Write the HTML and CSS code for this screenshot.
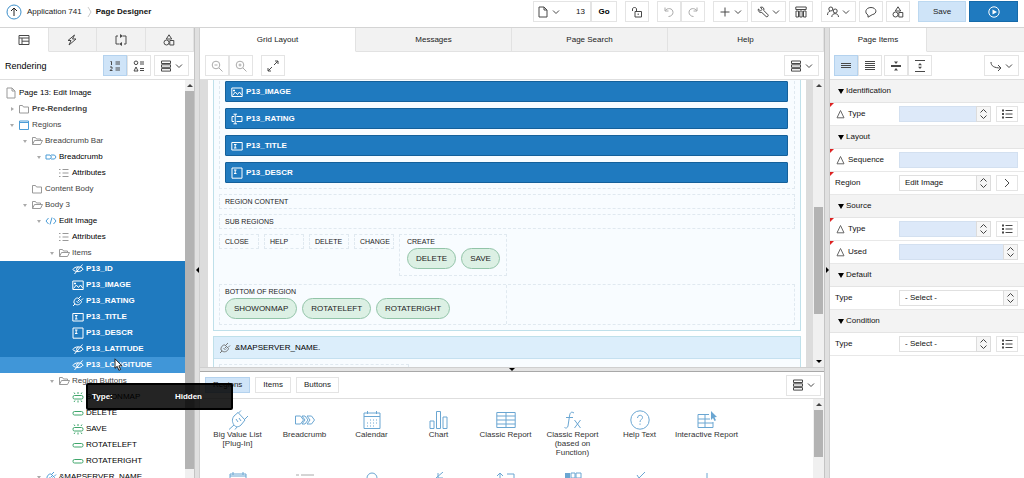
FILE: index.html
```html
<!DOCTYPE html>
<html lang="en">
<head>
<meta charset="utf-8">
<title>Page Designer</title>
<link rel="stylesheet" href="styles.css">
</head>
<body>
<svg class="sprite" aria-hidden="true">
  <symbol id="chev" viewBox="0 0 8 8"><path d="M1 2.500l3 3 3-3"/></symbol>
  <symbol id="updown" viewBox="0 0 8 12"><path d="M1 4.500L4 1.500l3 3M1 7.500l3 3 3-3"/></symbol>
  <symbol id="page" viewBox="0 0 12 12"><path d="M2 1h5l3 3v7H2zM7 1v3h3"/></symbol>
  <symbol id="folder" viewBox="0 0 12 12"><path d="M1.500 2.500h3l1 1.500h5v6h-9z"/></symbol>
  <symbol id="open" viewBox="0 0 12 12"><path d="M1.500 9.500v-7h3l1 1.500h4v1.500M1.500 9.500l2-4h8l-2 4z"/></symbol>
  <symbol id="window" viewBox="0 0 12 12"><path d="M1.500 2h9v8.500h-9zM1.500 3.500h9"/></symbol>
  <symbol id="crumb" viewBox="0 0 12 12"><path d="M1 4h4l1.500 2L5 8H1zM6 4h3.500L11 6 9.500 8H6"/></symbol>
  <symbol id="attrs" viewBox="0 0 12 12"><path d="M4.500 2.500h6M4.500 6h6M4.500 9.500h6M1 2.500h1.500M1 6h1.500M1 9.500h1.500"/></symbol>
  <symbol id="code" viewBox="0 0 12 12"><path d="M3.500 3L1 6l2.500 3M8.500 3L11 6 8.500 9M7 2.500l-2 7"/></symbol>
  <symbol id="hidden" viewBox="0 0 12 12"><path d="M.8 6.500C3 3.200 8.500 2.800 11.200 6 9 9.300 3.500 9.500.8 6.500zM10.500 1.500l-8 9.500M6.500 4.300a2 2 0 1 0 .1 4"/></symbol>
  <symbol id="image" viewBox="0 0 12 12"><path d="M.8 2h10.400v8.500H.8zM1.500 9.500L4.300 6l2.200 2.500L8.500 6l2.200 3M3 3.500v2M2 4.500h2"/></symbol>
  <symbol id="plug" viewBox="0 0 12 12"><path d="M2 8C1.500 5 4 2.500 6 3L9.500 6.500C9 9 6 10.500 4 9.500zM7 3l2-2M9 5.500l2-2M3 9l-2 2M4.500 6l2 2M6 5l1.500 1.500"/></symbol>
  <symbol id="text" viewBox="0 0 12 12"><path d="M.8 2.500h10.400v7.500H.8zM3 4.500h2.500M4.200 4.500v3.500M3 8h2.500"/></symbol>
  <symbol id="area" viewBox="0 0 12 12"><path d="M1 1h10v10.200H1zM3 3h2.500M4.200 3v3.500M3 6.500h2.500"/></symbol>
  <symbol id="rate" viewBox="0 0 12 12"><path d="M2.500 1.200h3.500M2.500 10.800h3.500M4.200 1.200v9.600M3 3.500H1v5h2M5.500 3.500H11v5H5.500"/></symbol>
  <symbol id="pill" viewBox="0 0 12 12"><rect x="1" y="4.500" width="10" height="3.500" rx="1.500"/></symbol>
  <symbol id="pillhot" viewBox="0 0 12 12"><rect x="1" y="4.500" width="10" height="3.500" rx="1.500"/><path d="M3 3L2 1.500M6 3V1M9 3l1-1.500M3 9.500L2 11M6 9.500v2M9 9.500l1 1.500"/></symbol>
  <symbol id="stack" viewBox="0 0 12 12"><path d="M1.500 1h9v2.500h-9zM1.500 4.800h9v2.500h-9zM1.500 8.600h9v2.500h-9z"/></symbol>
  <symbol id="shapes" viewBox="0 0 12 12"><path d="M6 .8L8.700 5H3.300zM6.800 6.500h4v4.500h-4z"/><circle cx="3.500" cy="8.500" r="2.500"/></symbol>
  <symbol id="zout" viewBox="0 0 12 12"><circle cx="5" cy="5" r="3.800"/><path d="M8 8l3.500 3.500M3.500 5h3"/></symbol>
  <symbol id="zin" viewBox="0 0 12 12"><circle cx="5" cy="5" r="3.800"/><path d="M8 8l3.500 3.500M3.500 5h3M5 3.500v3"/></symbol>
  <symbol id="undo" viewBox="0 0 12 12"><path d="M2 1.500v3.500h3.500M2.200 4.800C4 1.500 10 1.800 10 6.500c0 2-2 4-4.500 4"/></symbol>
  <symbol id="tri" viewBox="0 0 12 12"><path d="M5.500 2.500L9 9.800H2z"/></symbol>
  <symbol id="list" viewBox="0 0 12 12"><path d="M4.500 2.500h7M4.500 6h7M4.500 9.500h7"/><path d="M1 2.500h2M1 6h2M1 9.500h2" stroke-width="2"/></symbol>
</svg>

<div class="app">
  <header class="topbar">
    <nav class="crumbs">
      <a class="up" href="#" aria-label="Up"><svg class="i16" viewBox="0 0 16 16"><circle class="ring" cx="8" cy="8" r="7"/><path d="M8 12V4M5 7l3-3 3 3"/></svg></a>
      <a href="#">Application 741</a>
      <svg class="sep" viewBox="0 0 6 16"><path d="M1 3l3 5-3 5"/></svg>
      <strong>Page Designer</strong>
    </nav>
    <div class="actions">
      <div class="group">
        <button class="btn pagebtn" aria-label="Page"><svg class="i12"><use href="#page"/></svg><svg class="i8"><use href="#chev"/></svg></button>
        <input class="pageno" aria-label="Page number" value="13">
        <button class="btn go">Go</button>
      </div>
      <button class="btn sq" aria-label="Unlock"><svg class="i12" viewBox="0 0 12 12"><path d="M4 5.500h6.500V11H4zM5.500 5.500V3c0-2-4-2-4 0v2M7.200 7.500v1.500"/></svg></button>
      <div class="group pale">
        <button class="btn sq" aria-label="Undo"><svg class="i12"><use href="#undo"/></svg></button>
        <button class="btn sq" aria-label="Redo"><svg class="i12 flip"><use href="#undo"/></svg></button>
      </div>
      <div class="cluster">
        <button class="btn wide" aria-label="Create"><svg class="i12" viewBox="0 0 12 12"><path d="M6 1.500v9M1.500 6h9"/></svg><svg class="i8"><use href="#chev"/></svg></button>
        <button class="btn wide" aria-label="Utilities"><svg class="i12" viewBox="0 0 12 12"><path d="M3.500 1.200C6 .5 7.500 2.500 6.800 4.500l4.200 4.300c.8 1-.8 2.600-1.800 1.800L4.800 6.500C2.500 7 .8 5.200 1.300 3L3.500 5 5 3.400z"/></svg><svg class="i8"><use href="#chev"/></svg></button>
        <button class="btn sq" aria-label="Component view"><svg class="i12" viewBox="0 0 12 12"><path d="M.8 1h10.400v2.500H.8zM1 5h2.500v6H1zM4.800 5h2.400v6H4.800zM8.500 5H11v6H8.500z"/></svg></button>
      </div>
      <div class="cluster">
        <button class="btn wide" aria-label="Team"><svg class="i12" viewBox="0 0 12 12"><circle cx="3.800" cy="3" r="2"/><circle cx="8.200" cy="5" r="2"/><path d="M.5 9c0-2 1-3.300 2.500-4M4.800 11c0-4.500 6.700-4.500 6.700 0"/></svg><svg class="i8"><use href="#chev"/></svg></button>
        <button class="btn sq" aria-label="Comments"><svg class="i12" viewBox="0 0 12 12"><path d="M3 9C-.8 7 .5 1.500 6 1.500s7 6 1.200 7.200L3 11.200z"/></svg></button>
        <button class="btn sq" aria-label="Shared components"><svg class="i12"><use href="#shapes"/></svg></button>
      </div>
      <div class="cluster">
        <button class="btn save">Save</button>
        <button class="btn run" aria-label="Run"><svg class="i12" viewBox="0 0 12 12"><circle cx="6" cy="6" r="5.200"/><path class="solid" d="M4.500 3.500L9 6 4.500 8.500z"/></svg></button>
      </div>
    </div>
  </header>

  <main class="panes">
    <section class="pane left">
      <div class="tabs">
        <button class="tab on" aria-label="Rendering"><svg class="i12" viewBox="0 0 12 12"><path d="M1 1.500h10v9H1zM1 4h10M4 4v6.500M4 7.200h7"/></svg></button>
        <button class="tab" aria-label="Dynamic actions"><svg class="i12" viewBox="0 0 12 12"><path d="M8.500 1L2 6.500h3L3 11l7-6H6.500z"/></svg></button>
        <button class="tab" aria-label="Processing"><svg class="i12" viewBox="0 0 12 12"><path d="M3 2H1v8h3M9 2H8M9 2h2v8H9"/><path class="solid" d="M5 0l3 2-3 2zM7 8l-3 2 3 2z"/></svg></button>
        <button class="tab" aria-label="Shared components"><svg class="i12"><use href="#shapes"/></svg></button>
      </div>
      <div class="tools">
        <span class="title">Rendering</span>
        <div class="group">
          <button class="btn sq on" aria-label="Group by processing order"><svg class="i12" viewBox="0 0 12 12"><path d="M1.500 1.500h1v3.500M1 7h2v1.500L1 10.500h2.500M6.500 2h4.500M6.500 4h4.500M6.500 8h4.500M6.500 10h4.500"/></svg></button>
          <button class="btn sq" aria-label="Group by component type"><svg class="i12" viewBox="0 0 12 12"><circle cx="3" cy="2.800" r="1.800"/><path d="M3 7l2 4H1zM7 2h4M7 4h4M7 8.500h4M7 10.500h4"/></svg></button>
        </div>
        <button class="btn wide" aria-label="Menu"><svg class="i12"><use href="#stack"/></svg><svg class="i8"><use href="#chev"/></svg></button>
      </div>
      <div class="scroller">
        <ul class="tree">
          <li class="l0"><svg class="i12"><use href="#page"/></svg>Page 13: Edit Image</li>
          <li class="l1 dim strong"><i class="tw shut"></i><svg class="i12"><use href="#folder"/></svg>Pre-Rendering</li>
          <li class="l1 dim"><i class="tw"></i><svg class="i12 blue"><use href="#window"/></svg>Regions</li>
          <li class="l2 dim"><i class="tw"></i><svg class="i12"><use href="#open"/></svg>Breadcrumb Bar</li>
          <li class="l3"><i class="tw"></i><svg class="i12 blue"><use href="#crumb"/></svg>Breadcrumb</li>
          <li class="l4"><i class="tw none"></i><svg class="i12"><use href="#attrs"/></svg>Attributes</li>
          <li class="l2 dim"><i class="tw none"></i><svg class="i12"><use href="#folder"/></svg>Content Body</li>
          <li class="l2 dim"><i class="tw"></i><svg class="i12"><use href="#open"/></svg>Body 3</li>
          <li class="l3"><i class="tw"></i><svg class="i12 blue"><use href="#code"/></svg>Edit Image</li>
          <li class="l4"><i class="tw none"></i><svg class="i12"><use href="#attrs"/></svg>Attributes</li>
          <li class="l4 dim"><i class="tw"></i><svg class="i12"><use href="#open"/></svg>Items</li>
          <li class="l5 sel"><i class="tw none"></i><svg class="i12"><use href="#hidden"/></svg>P13_ID</li>
          <li class="l5 sel"><i class="tw none"></i><svg class="i12"><use href="#image"/></svg>P13_IMAGE</li>
          <li class="l5 sel"><i class="tw none"></i><svg class="i12"><use href="#plug"/></svg>P13_RATING</li>
          <li class="l5 sel"><i class="tw none"></i><svg class="i12"><use href="#text"/></svg>P13_TITLE</li>
          <li class="l5 sel"><i class="tw none"></i><svg class="i12"><use href="#area"/></svg>P13_DESCR</li>
          <li class="l5 sel"><i class="tw none"></i><svg class="i12"><use href="#hidden"/></svg>P13_LATITUDE</li>
          <li class="l5 sel hover"><i class="tw none"></i><svg class="i12"><use href="#hidden"/></svg>P13_LONGITUDE
            <svg class="cursor" viewBox="0 0 9 13"><path d="M1 .8v9.500l2.200-2 1.700 4 1.700-.8-1.700-3.700h3z"/></svg>
            <span class="tip" role="tooltip"><b>Type:</b><b>Hidden</b></span>
          </li>
          <li class="l4 dim"><i class="tw"></i><svg class="i12"><use href="#open"/></svg>Region Buttons</li>
          <li class="l5"><i class="tw none"></i><svg class="i12 green"><use href="#pillhot"/></svg>SHOWONMAP</li>
          <li class="l5"><i class="tw none"></i><svg class="i12 green"><use href="#pill"/></svg>DELETE</li>
          <li class="l5"><i class="tw none"></i><svg class="i12 green"><use href="#pillhot"/></svg>SAVE</li>
          <li class="l5"><i class="tw none"></i><svg class="i12 green"><use href="#pill"/></svg>ROTATELEFT</li>
          <li class="l5"><i class="tw none"></i><svg class="i12 green"><use href="#pill"/></svg>ROTATERIGHT</li>
          <li class="l3"><i class="tw"></i><svg class="i12 blue"><use href="#plug"/></svg>&amp;MAPSERVER_NAME.</li>
        </ul>
        <div class="bar bar-tree"><i class="au"></i><span class="track"><span class="thumb"></span></span></div>
      </div>
    </section>

    <div class="split"><i class="pt lt"></i></div>

    <section class="pane center">
      <div class="tabs">
        <button class="tab on">Grid Layout</button>
        <button class="tab">Messages</button>
        <button class="tab">Page Search</button>
        <button class="tab">Help</button>
      </div>
      <div class="tools">
        <div class="group pale">
          <button class="btn sq" aria-label="Zoom out"><svg class="i12"><use href="#zout"/></svg></button>
          <button class="btn sq" aria-label="Zoom in"><svg class="i12"><use href="#zin"/></svg></button>
        </div>
        <button class="btn sq" aria-label="Expand"><svg class="i12" viewBox="0 0 12 12"><path d="M7 5l4-4M8 1h3v3M5 7l-4 4M1 8v3h3"/></svg></button>
        <span class="grow"></span>
        <button class="btn wide" aria-label="Menu"><svg class="i12"><use href="#stack"/></svg><svg class="i8"><use href="#chev"/></svg></button>
      </div>
      <div class="scroller canvas">
        <div class="sheet">
          <div class="region first">
            <div class="items">
              <div class="item"><svg class="i12"><use href="#image"/></svg>P13_IMAGE</div>
              <div class="item"><svg class="i12"><use href="#rate"/></svg>P13_RATING</div>
              <div class="item"><svg class="i12"><use href="#text"/></svg>P13_TITLE</div>
              <div class="item"><svg class="i12"><use href="#area"/></svg>P13_DESCR</div>
            </div>
            <div class="slot">REGION CONTENT</div>
            <div class="slot">SUB REGIONS</div>
            <div class="slots">
              <div class="slot">CLOSE</div>
              <div class="slot">HELP</div>
              <div class="slot">DELETE</div>
              <div class="slot">CHANGE</div>
              <div class="slot create">CREATE
                <div class="pills"><button class="pill">DELETE</button><button class="pill">SAVE</button></div>
              </div>
            </div>
            <div class="slot bottom">
              <div class="bottom-in">BOTTOM OF REGION
                <div class="pills"><button class="pill">SHOWONMAP</button><button class="pill">ROTATELEFT</button><button class="pill">ROTATERIGHT</button></div>
              </div>
            </div>
          </div>
          <div class="region">
            <h2 class="rhead"><svg class="i12"><use href="#plug"/></svg>&amp;MAPSERVER_NAME.</h2>
            <div class="rbody"><div class="ghost"></div></div>
          </div>
        </div>
        <div class="bar bar-grid"><i class="au"></i><span class="track"><span class="thumb"></span></span><i class="ad"></i></div>
      </div>
      <div class="hsplit"><i class="pt dn"></i></div>
      <div class="palette">
        <div class="tools ptools">
          <button class="btn chip on">Regions</button>
          <button class="btn chip">Items</button>
          <button class="btn chip">Buttons</button>
          <span class="grow"></span>
          <button class="btn wide" aria-label="Menu"><svg class="i12"><use href="#stack"/></svg><svg class="i8"><use href="#chev"/></svg></button>
        </div>
        <div class="scroller">
          <ul class="gallery">
            <li><svg class="i20" viewBox="0 0 20 20"><path d="M6 6l4-3.500 7 7.500-4 5c-3 3-6 1.500-7 0s-3-5 0-9zM10.500 3L13 .5M16.500 9.500L20 6M6 15l-5 4.500M9 17l-2 2.500M8 9l2 3M11 8l2 3"/></svg>Big Value List [Plug-In]</li>
            <li><svg class="i20" viewBox="0 0 20 20"><path d="M.5 6h5l3 4-3 4h-5zM7 6h3l3 4-3 4H7l3-4zM12 6h4.500l3 4-3 4H12l3-4z"/></svg>Breadcrumb</li>
            <li><svg class="i20" viewBox="0 0 20 20"><path d="M2 3h16v15.500H2zM2 6.500h16M5.500 1v3M14.500 1v3M8 10h1M11 10h1M14 10h1M5 13h1M8 13h1M11 13h1M14 13h1M5 16h1M8 16h1M11 16h1"/></svg>Calendar</li>
            <li><svg class="i20" viewBox="0 0 20 20"><path d="M1 11h4v7.500H1zM7.500 1.500h4v17h-4zM14 7h4v11.500h-4z"/></svg>Chart</li>
            <li><svg class="i20" viewBox="0 0 20 20"><path d="M.8 2.500h18.400v15H.8zM.8 6h18.400M.8 10h18.400M.8 14h18.400M10 2.500v15"/></svg>Classic Report</li>
            <li><svg class="i20" viewBox="0 0 20 20"><path d="M11 3c-3-2-4 0-4.500 3L5 16c-.5 2-2 2.500-3.500 1.500M3 7.500h7M11.500 10l6 8M17.500 10l-6 8"/></svg>Classic Report (based on Function)</li>
            <li><svg class="i20" viewBox="0 0 20 20"><circle cx="10" cy="10" r="9.200"/><path d="M7.500 8c0-3.500 5-3.500 5-.5 0 2-2.500 2-2.500 4.500M10 13.500v1.300"/></svg>Help Text</li>
            <li><svg class="i20" viewBox="0 0 20 20"><path d="M12 4.500H1v13h15V12M1 9h12M1 13h15M8 4.500v13"/><path class="solid" d="M14 1l6 6-2.500.3 1.500 3-1.500.7-1.500-3-2 2z"/></svg>Interactive Report</li>
            <li><svg class="i20" viewBox="0 0 20 20"><path d="M2 2h16v16H2zM2 4h16M5 0v3M15 0v3"/></svg></li>
            <li><svg class="i20 gray" viewBox="0 0 20 20"><path d="M1 3h3M6 3h13M1 8h3M6 8h13"/></svg></li>
            <li><svg class="i20" viewBox="0 0 20 20"><circle cx="10" cy="6" r="5"/></svg></li>
            <li><svg class="i20" viewBox="0 0 20 20"><path d="M14 0L7 6M9 1v5h5"/></svg></li>
            <li><svg class="i20" viewBox="0 0 20 20"><path d="M4 10V1M1 4l3-3 3 3M11 2h7v5"/></svg></li>
            <li><svg class="i20" viewBox="0 0 20 20"><path class="solid" d="M2 1h5v5H2z"/><path d="M8 1h4v5H8zM13 1h5v5h-5z"/></svg></li>
            <li><svg class="i20" viewBox="0 0 20 20"><path d="M15 0L8 7M7 3l2 3"/></svg></li>
            <li><svg class="i20" viewBox="0 0 20 20"><path d="M10 1v8"/></svg></li>
          </ul>
          <div class="bar bar-pal"><i class="au"></i><span class="track"><span class="thumb"></span></span></div>
        </div>
      </div>
    </section>

    <div class="split"><i class="pt rt"></i></div>

    <section class="pane right">
      <div class="tabs">
        <button class="tab on">Page Items</button><span class="tabfill"></span>
      </div>
      <div class="tools rtools">
        <div class="group">
          <button class="btn sq on" aria-label="Show common"><svg class="i12" viewBox="0 0 12 12"><path d="M1 3.500h10M1 5.500h10M1 7.500h10"/></svg></button>
          <button class="btn sq" aria-label="Show all"><svg class="i12" viewBox="0 0 12 12"><path d="M1 1.500h10M1 3.500h10M1 5.500h10M1 7.500h10M1 9.500h10"/></svg></button>
        </div>
        <div class="group">
          <button class="btn sq" aria-label="Collapse all"><svg class="i12" viewBox="0 0 12 12"><path d="M1 6h10" stroke-width="2"/><path class="solid" d="M4 1.500h4L6 4zM4 10.500h4L6 8z"/></svg></button>
          <button class="btn sq" aria-label="Expand all"><svg class="i12" viewBox="0 0 12 12"><path d="M1 .5h10M1 11.500h10"/><path class="solid" d="M4 5.300h4L6 3zM4 6.700h4L6 9z"/></svg></button>
        </div>
        <span class="grow"></span>
        <button class="btn wide" aria-label="Go to"><svg class="i12" viewBox="0 0 12 12"><path d="M1 2c0 4 3 6 10 6M8 5l3 3-3 3"/></svg><svg class="i8"><use href="#chev"/></svg></button>
      </div>
      <h3>Identification</h3>
      <div class="prop req"><label for="idt"><svg class="i12"><use href="#tri"/></svg>Type</label><span class="pick tint"><select id="idt"><option></option></select><svg><use href="#updown"/></svg></span><button class="btn side" aria-label="Pick type"><svg class="i12"><use href="#list"/></svg></button></div>
      <h3>Layout</h3>
      <div class="prop req"><label for="seq"><svg class="i12"><use href="#tri"/></svg>Sequence</label><input id="seq" class="tint"></div>
      <div class="prop req"><label for="reg">Region</label><span class="pick"><select id="reg"><option>Edit Image</option></select><svg><use href="#updown"/></svg></span><button class="btn side" aria-label="Go to region"><svg class="i12" viewBox="0 0 12 12"><path d="M4 2l4 4-4 4"/></svg></button></div>
      <h3>Source</h3>
      <div class="prop req"><label for="srt"><svg class="i12"><use href="#tri"/></svg>Type</label><span class="pick tint"><select id="srt"><option></option></select><svg><use href="#updown"/></svg></span><button class="btn side" aria-label="Pick source type"><svg class="i12"><use href="#list"/></svg></button></div>
      <div class="prop req"><label for="use"><svg class="i12"><use href="#tri"/></svg>Used</label><span class="pick tint"><select id="use"><option></option></select><svg><use href="#updown"/></svg></span></div>
      <h3>Default</h3>
      <div class="prop"><label for="def">Type</label><span class="pick"><select id="def"><option>- Select -</option></select><svg><use href="#updown"/></svg></span></div>
      <h3>Condition</h3>
      <div class="prop"><label for="con">Type</label><span class="pick"><select id="con"><option>- Select -</option></select><svg><use href="#updown"/></svg></span><button class="btn side" aria-label="Pick condition"><svg class="i12"><use href="#list"/></svg></button></div>
    </section>
  </main>
</div>
</body>
</html>
```
FILE: styles.css
```css
* { box-sizing: border-box; }
body { margin: 0; font: 8px/12px "Liberation Sans", Arial, sans-serif; color: #111; background: #fff; }
button, input, select { font: inherit; color: inherit; margin: 0; }
ul { list-style: none; margin: 0; padding: 0; }
h2, h3 { margin: 0; font-size: 8px; font-weight: 400; }
svg { fill: none; stroke: currentColor; stroke-width: 1; flex: none; display: block; }
.solid { fill: currentColor; stroke: none; }
.sprite { position: absolute; width: 0; height: 0; }
.i8 { width: 8px; height: 8px; }
.i12 { width: 12px; height: 12px; }
.i16 { width: 16px; height: 16px; }
.i20 { width: 20px; height: 20px; }
.flip { transform: scaleX(-1); }
.grow { flex: 1; }

.app { height: 100vh; display: flex; flex-direction: column; overflow: hidden; }
.topbar { flex: none; display: flex; justify-content: space-between; height: 28px; padding: 1px 6px 5px; border-bottom: 1px solid #d4d4d4; }
.crumbs { display: flex; align-items: center; gap: 5px; }
.crumbs a { color: #222; text-decoration: none; }
.ring { stroke: #3d8fca; }
.sep { width: 6px; height: 16px; color: #ccc; margin-right: -2px; }
.actions, .cluster { display: flex; }
.actions { gap: 8px; }
.cluster { gap: 3px; }
.group { display: flex; }
.group > * + * { border-left: 0; }

.btn { display: flex; align-items: center; justify-content: center; gap: 3px; height: 21px; padding: 0 4px; background: #fff; border: 1px solid #e4e4e4; color: #222; }
.btn svg, .tab svg { color: #484848; }
.sq { width: 24px; }
.wide { width: 35px; }
.btn.on { background: #cfe4f8; border: 1px solid #b4d2ee; }
.pale .btn svg { color: #aaa; }
.pagebtn { width: 29px; border-right: 0; }
.pageno { width: 29px; height: 21px; text-align: right; border: 1px solid #e4e4e4; border-left: 0; padding: 0 5px; }
.go { width: 26px; font-weight: 700; color: #000; }
.save { width: 48px; background: #cfe4f8; border-color: #bcd8f0; }
.run { width: 49px; background: #1f7abf; border-color: #166aa9; }
.run svg { color: #fff; }

.panes { flex: 1; min-height: 0; display: grid; grid-template-columns: minmax(0, 194fr) 6px minmax(0, 624fr) 6px minmax(0, 194fr); }
.pane { display: flex; flex-direction: column; min-width: 0; min-height: 0; }
.tabs { flex: none; display: flex; height: 24px; }
.tab { flex: 1; display: flex; align-items: center; justify-content: center; padding: 0; background: #f2f2f2; border: 0; border-right: 1px solid #e2e2e2; border-bottom: 1px solid #e2e2e2; color: #222; }
.tab.on { background: #fff; border-bottom-color: #fff; }
.tabfill { flex: 1; background: #f2f2f2; border-bottom: 1px solid #e2e2e2; }
.tools { flex: none; display: flex; align-items: center; gap: 3px; height: 28px; padding: 0 5px; border-bottom: 1px solid #dedede; }
.title { flex: 1; color: #000; font-size: 9px; }
.center > .tools { gap: 8px; }
.split { position: relative; background: #e0e0e0; border-left: 1px solid #c4c4c4; border-right: 1px solid #cfcfcf; }
.hsplit { position: relative; flex: none; height: 5px; background: #e4e4e4; border-bottom: 1px solid #a8a8a8; border-top: 1px solid #cfcfcf; }
.pt { position: absolute; border: 3px solid transparent; width: 0; height: 0; }
.lt { top: 53%; left: -2px; border-right-color: #000; }
.rt { top: 53%; left: 1px; border-left-color: #000; }
.dn { left: 50%; top: 0; margin-left: -3px; border-top-color: #000; }

.scroller { flex: 1; min-height: 0; display: flex; overflow: hidden; }
.left .scroller { overflow: visible; }
.bar { flex: none; display: flex; flex-direction: column; align-items: center; background: #f0f0f0; }
.au, .ad { flex: none; width: 0; height: 0; border: 3px solid transparent; }
.au { border-bottom-color: #444; margin: 1px 0 4px; }
.ad { border-top-color: #000; margin: 4px 0 1px; }
.track { flex: 1; width: 100%; display: flex; flex-direction: column; }
.track::before, .track::after { content: ""; }
.thumb { display: block; background: #b3b3b3; margin: 0 1px; }
.bar-tree { width: 9px; }
.bar-tree .thumb { flex: 378; margin: 0; }
.bar-tree .track::after { flex: 9; }
.bar-grid { width: 11px; }
.bar-grid .track::before { flex: 116; }
.bar-grid .thumb { flex: 108; }
.bar-grid .track::after { flex: 42; }
.bar-pal { width: 11px; }
.bar-pal .thumb { flex: 47; }
.bar-pal .track::after { flex: 21; }

.tree { flex: 1; min-width: 0; padding-top: 5px; white-space: nowrap; }
.tree li { position: relative; display: flex; align-items: center; height: 16px; color: #000; }
.tree li > svg { color: #999; margin-right: 2px; }
.tree li > svg.blue { color: #4b9cd6; }
.tree li > svg.green { color: #3fa66b; }
.tree .dim { color: #444; }
.tree .strong { font-weight: 700; }
.tree .sel { background: #1f7abf; color: #fff; font-weight: 700; }
.tree .hover { background: #4096d8; z-index: 2; }
.tree .sel > svg { color: #fff; }
.tree .l0 { padding-left: 5px; }
.tree .l1 { padding-left: 8px; }
.tree .l2 { padding-left: 21px; }
.tree .l3 { padding-left: 35px; }
.tree .l4 { padding-left: 48px; }
.tree .l5 { padding-left: 62px; }
.tw { flex: none; width: 0; height: 0; border: 2px solid transparent; border-top: 3px solid #aaa; border-bottom: 0; margin: 0 4px 0 2px; }
.tw.shut { border: 2px solid transparent; border-left: 3px solid #aaa; border-right: 0; margin: 0 4px 0 3px; }
.tw.none { visibility: hidden; }
.tree li > svg.cursor { position: absolute; left: 114px; top: 1px; width: 9px; height: 13px; fill: #fff; color: #222; }
.tip { position: absolute; left: 86px; top: 26px; width: 147px; height: 27px; padding: 0 29px 0 4px; display: flex; align-items: center; justify-content: space-between; color: #fff; background: rgba(0, 0, 0, .86); border: 2px solid #000; border-radius: 2px; }

.canvas { flex: 288; background: #dcdcdc; }
.sheet { flex: 1; min-width: 0; margin: 0 7px 0 8px; padding: 0 5px; background: #fff; }
.region { border: 1px solid #bfe0ea; background: #f8fcff; margin-bottom: 5px; }
.region.first { border-top: 0; padding: 1px 5px 5px; }
.items { display: flex; flex-direction: column; gap: 6px; padding: 0 6px 5px 5px; border: 1px dashed #e0e9f0; border-top: 0; margin-bottom: 5px; }
.item { display: flex; align-items: center; gap: 3px; height: 21px; padding: 0 5px; background: #1f7abf; border: 1px solid #14609a; border-radius: 1px; color: #fff; font-weight: 700; }
.slot { border: 1px dashed #e0e9f0; padding: 0 5px; font-size: 7px; line-height: 13px; margin-bottom: 5px; color: #222; }
.slots { display: grid; grid-template-columns: repeat(4, 40px) 108px; gap: 5px; align-items: start; margin-bottom: 8px; }
.slots .slot { margin: 0; }
.slots .create { padding: 0 6px 6px 7px; }
.pills { display: flex; gap: 5px; }
.pill { height: 21px; padding: 0 8px; border: 1px solid #92c4a8; border-radius: 11px; background: #dcf0e4; color: #222; font-size: 8px; white-space: nowrap; }
.slot.bottom { padding: 0; margin: 0; }
.bottom-in { width: 50%; padding: 0 5px 5px; border-right: 1px dashed #e0e9f0; }
.rhead { display: flex; align-items: center; gap: 4px; height: 22px; padding: 0 5px; background: #dceefb; border-bottom: 1px solid #c5e0f0; color: #000; }
.rhead svg { color: #777; }
.rbody { padding: 5px; }
.ghost { width: 33%; height: 20px; border: 1px dashed #e0e9f0; }

.palette { flex: 106; min-height: 0; display: flex; flex-direction: column; }
.ptools { height: 27px; padding-right: 3px; }
.chip { height: 16px; padding: 0 7px; margin-right: 2px; }
.gallery { flex: 1; display: grid; grid-template-columns: repeat(8, 67px); grid-auto-rows: 62px; padding: 11px 4px 0; align-content: start; }
.gallery li { display: flex; flex-direction: column; align-items: center; text-align: center; line-height: 9px; color: #333; }
.gallery svg { color: #6aa6d2; }
.gallery .gray { color: #aaa; }

.right .tab { flex: 0 0 50%; }
.rtools { gap: 2px; padding-left: 4px; }
h3 { flex: none; display: flex; align-items: center; gap: 2px; height: 23px; padding: 0 8px; background: #f3f3f3; border-bottom: 1px solid #e4e4e4; color: #111; }
h3::before { content: ""; border: 3px solid transparent; border-top: 5px solid #000; border-bottom: 0; }
.prop { position: relative; flex: none; display: flex; align-items: center; gap: 5px; height: 23px; padding: 0 6px 0 5px; border-bottom: 1px solid #e8e8e8; }
.req::before { content: ""; position: absolute; left: 0; top: 0; border-top: 4px solid #d22; border-right: 4px solid transparent; }
.prop label { flex: none; width: 59px; display: flex; align-items: center; gap: 1px; color: #111; }
.prop label svg { color: #666; }
.pick { position: relative; flex: 1; min-width: 0; }
.pick select, .prop input { display: block; width: 100%; height: 16px; border: 1px solid #e0e0e0; border-radius: 0; padding: 0 5px; background: #fff; appearance: none; }
.prop input { flex: 1; width: auto; min-width: 0; }
.pick.tint select, .prop .tint { border-color: #d3e0f0; }
.pick.tint select, .prop input.tint { background: #dde9f9; }
.pick > svg { position: absolute; right: 0; top: 0; width: 15px; height: 16px; padding: 1px 2px; background: #f6f6f6; border: 1px solid #dcdcdc; color: #444; pointer-events: none; }
.prop .side { width: 22px; height: 16px; padding: 0; }
```
